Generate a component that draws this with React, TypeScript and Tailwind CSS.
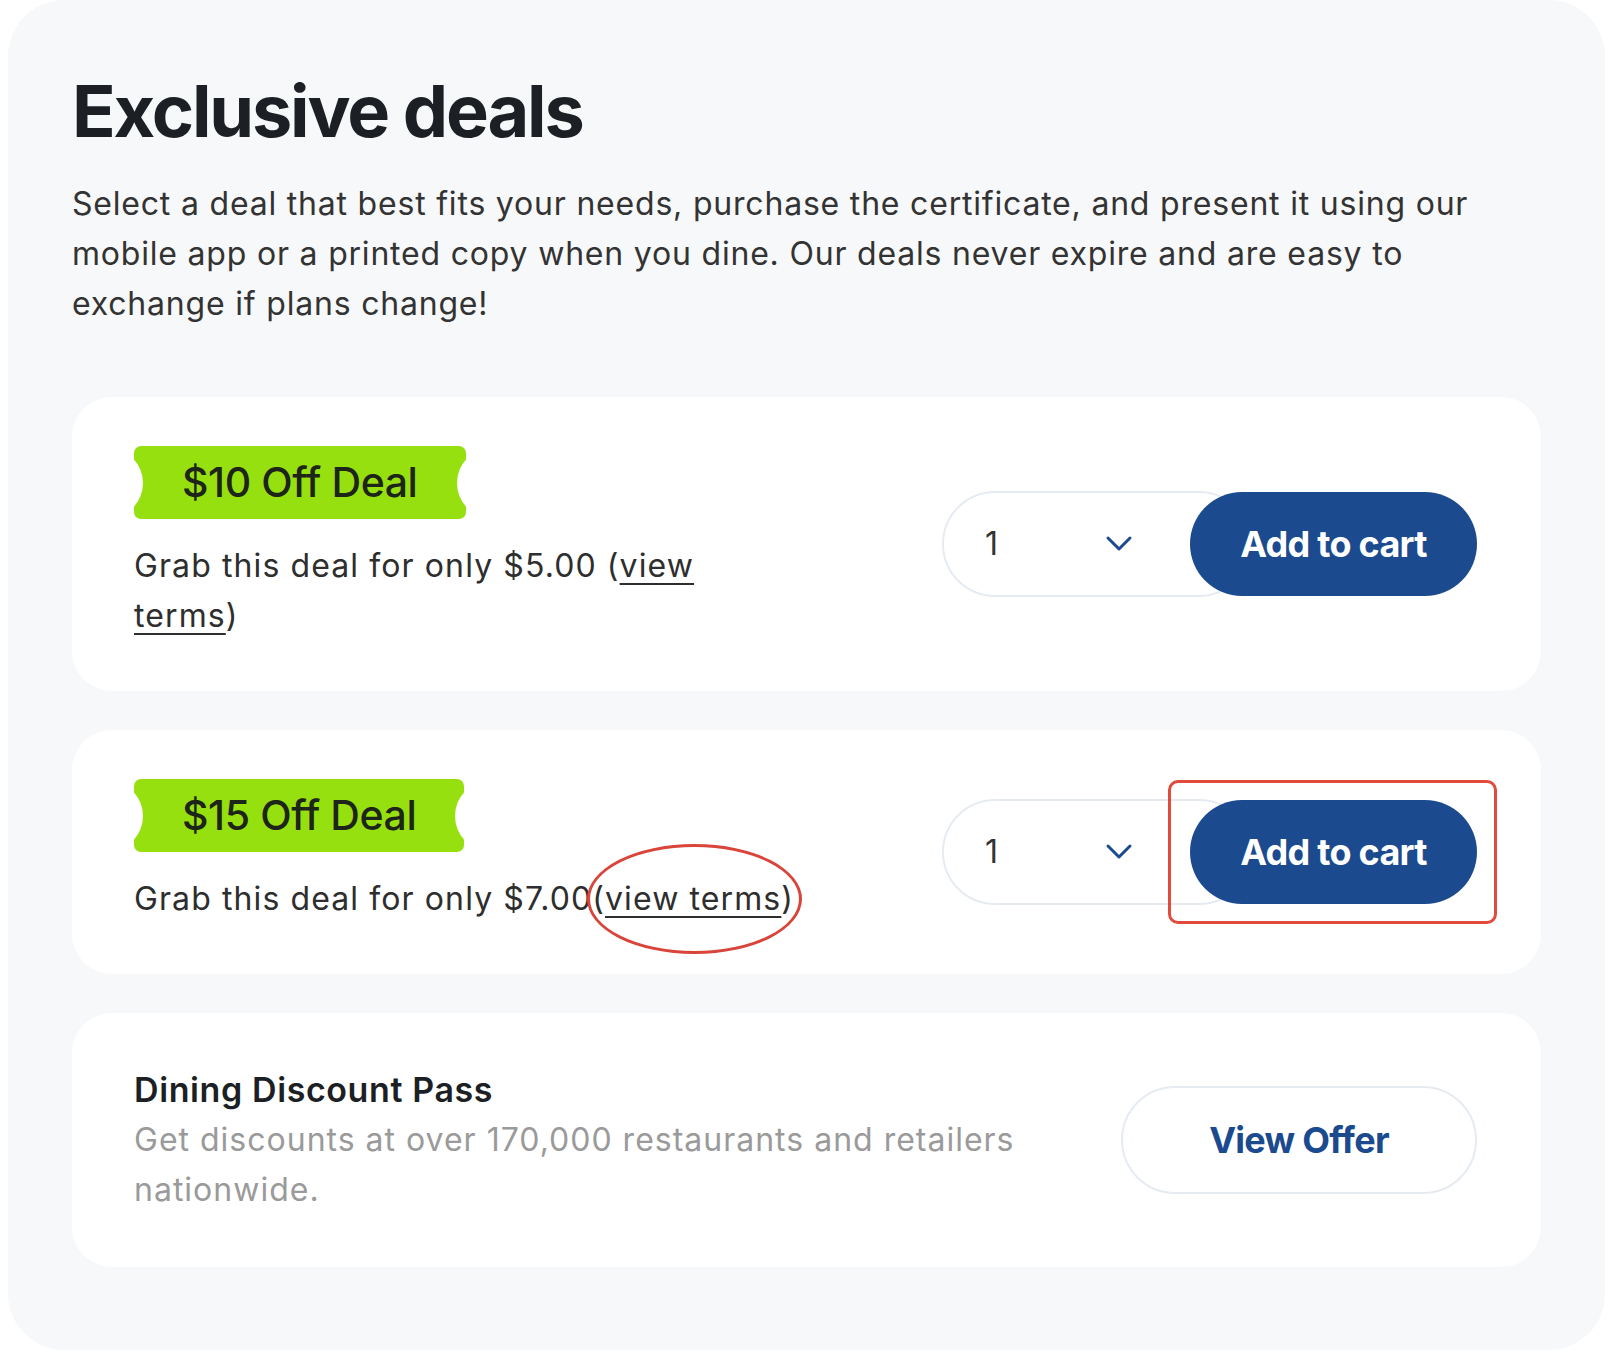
import React from "react";

const font = { fontFamily: "Inter, 'Noto Sans', sans-serif" };

function Badge({ children }: { children: React.ReactNode }) {
  return (
    <div className="relative inline-flex h-[73px] items-center overflow-hidden rounded-[7px] bg-[#97e010] px-12">
      <span className="absolute left-[-61px] top-1/2 h-[70px] w-[70px] -translate-y-1/2 rounded-full bg-white" />
      <span className="absolute right-[-61px] top-1/2 h-[70px] w-[70px] -translate-y-1/2 rounded-full bg-white" />
      <span className="relative text-[41px] font-medium leading-none tracking-[-0.01em] text-[#1d2418]">
        {children}
      </span>
    </div>
  );
}

function Chevron() {
  return (
    <svg width="28" height="17" viewBox="0 0 28 17" fill="none">
      <path d="M3 3l11 11L25 3" stroke="#1b4a8f" strokeWidth="3" strokeLinecap="round" strokeLinejoin="round" />
    </svg>
  );
}

function CartControls({ marked }: { marked?: boolean }) {
  return (
    <div className="flex shrink-0 items-center">
      <div className="flex h-[106px] w-[310px] items-center rounded-full border-2 border-[#e6ebf2] bg-white pl-[41px]">
        <span className="text-[32px] leading-none text-[#333]">1</span>
        <span className="ml-[107px] flex items-center">
          <Chevron />
        </span>
      </div>
      <div className="relative z-10 -ml-[62px]">
        <button className="flex h-[104px] w-[287px] items-center justify-center rounded-full bg-[#1b4a8f] text-[36px] font-bold tracking-[-0.02em] text-white">
          Add to cart
        </button>
        {marked && (
          <span className="pointer-events-none absolute -bottom-[20px] -left-[22px] -right-[20px] -top-[20px] rounded-[10px] border-[3px] border-[#e04b3b]" />
        )}
      </div>
    </div>
  );
}

export default function App() {
  return (
    <div className="min-h-screen bg-white pl-2" style={font}>
      <div className="w-[1597px] rounded-[56px] bg-[#f7f8fa] px-16 pb-[83px] pt-[75px]">
        <h1 className="text-[72px] font-bold leading-none tracking-[-0.03em] text-[#1c1f24]">
          Exclusive deals
        </h1>
        <p className="mt-8 w-[1440px] text-[32px] leading-[50px] tracking-[0.8px] text-[#333]">
          Select a deal that best fits your needs, purchase the certificate, and present it using our mobile app or a printed copy when you dine. Our deals never expire and are easy to exchange if plans change!
        </p>

        <div className="mt-[68px] flex flex-col gap-[39px]">
          {/* Card 1 */}
          <div className="flex items-center justify-between rounded-[40px] bg-white pb-[50px] pl-[62px] pr-16 pt-[49px]">
            <div className="flex flex-col items-start">
              <Badge>$10 Off Deal</Badge>
              <p className="mt-[22px] text-[32px] leading-[50px] tracking-[1.1px] text-[#2e2e2e]">
                Grab this deal for only $5.00 (<a className="underline decoration-2 underline-offset-[6px]">view<br />terms</a>)
              </p>
            </div>
            <CartControls />
          </div>

          {/* Card 2 */}
          <div className="flex items-center justify-between rounded-[40px] bg-white pb-[50px] pl-[62px] pr-16 pt-[49px]">
            <div className="flex flex-col items-start">
              <Badge>$15 Off Deal</Badge>
              <p className="mt-[22px] whitespace-nowrap text-[32px] leading-[50px] tracking-[1.1px] text-[#2e2e2e]">
                Grab this deal for only $7.00
                <span className="relative inline-block">
                  (<a className="underline decoration-2 underline-offset-[6px]">view terms</a>)
                  <span className="pointer-events-none absolute -bottom-[30px] -left-[5px] -right-[8px] -top-[30px] rounded-[50%] border-[3px] border-[#d9453a]" />
                </span>
              </p>
            </div>
            <CartControls marked />
          </div>

          {/* Card 3 */}
          <div className="flex items-center justify-between rounded-[40px] bg-white py-[52px] pl-[62px] pr-16">
            <div className="w-[940px]">
              <h3 className="text-[34px] font-semibold leading-[50px] tracking-[0.6px] text-[#1c1f24]">
                Dining Discount Pass
              </h3>
              <p className="text-[32px] leading-[50px] tracking-[1px] text-[#9a9a9a]">
                Get discounts at over 170,000 restaurants and retailers nationwide.
              </p>
            </div>
            <button className="flex h-[108px] w-[356px] items-center justify-center rounded-full border-2 border-[#e6ebf2] bg-white text-[36px] font-bold tracking-[-0.02em] text-[#1b4a8f]">
              View Offer
            </button>
          </div>
        </div>
      </div>
    </div>
  );
}
